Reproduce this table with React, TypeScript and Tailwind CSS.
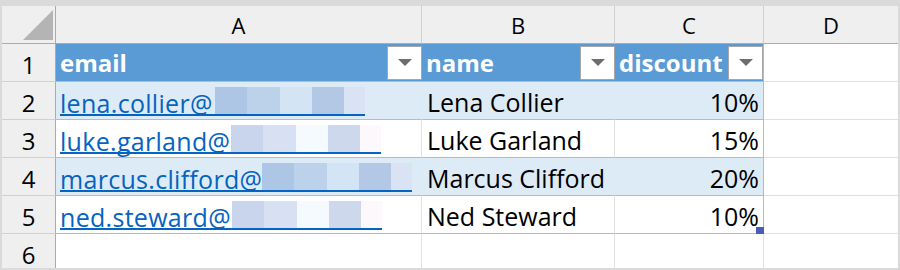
const blueBlocks = ["#adc6e5", "#bcd2eb", "#d3e5f5", "#b3c8e5", "#d9e3f3"];
const paleBlocks = ["#c9d5ec", "#d8e0f4", "#f5faff", "#cdd8ec", "#fdf8fb"];
const blockWidths = [32, 33, 32, 32, 21];

const rows = [
  { user: "lena.collier@", textW: "w-[155px]", name: "Lena Collier", discount: "10%", band: true },
  { user: "luke.garland@", textW: "w-[171px]", name: "Luke Garland", discount: "15%", band: false },
  { user: "marcus.clifford@", textW: "w-[202px]", name: "Marcus Clifford", discount: "20%", band: true },
  { user: "ned.steward@", textW: "w-[172px]", name: "Ned Steward", discount: "10%", band: false },
];

const FilterButton = () => (
  <div className="w-[35px] h-[34px] bg-white border border-[#a6a6a6] flex items-center justify-center shrink-0">
    <svg width="14" height="7" viewBox="0 0 14 7">
      <polygon points="0,0 14,0 7,7" fill="#6d6d6d" />
    </svg>
  </div>
);

const ColHead = ({ label, last }: { label: string; last?: boolean }) => (
  <div
    className={
      "bg-[#efefef] border-b border-[#ababab] flex items-center justify-center pt-[2px] text-[22px] text-black " +
      (last ? "" : "border-r border-r-[#d0d0d0]")
    }
  >
    {label}
  </div>
);

const RowHead = ({ n, last }: { n: number; last?: boolean }) => (
  <div
    className={
      "bg-[#efefef] border-r border-[#ababab] text-center pt-[4px] leading-[33px] text-[24px] text-black " +
      (last ? "" : "border-b border-b-[#d0d0d0]")
    }
  >
    {n}
  </div>
);

const TableHead = ({ label }: { label: string }) => (
  <div className="bg-[#5b9bd5] border-b border-[#9bc2e6] flex items-center justify-between pl-[4px]">
    <span className="text-white font-bold text-[24px] leading-[33px]">{label}</span>
    <FilterButton />
  </div>
);

export default function App() {
  return (
    <div className="w-[900px] h-[270px] bg-white border-2 border-t-[6px] border-[#dadada] font-['Open_Sans',sans-serif] overflow-hidden">
      <div className="grid grid-cols-[54px_366px_193px_149px_134px] grid-rows-[38px_38px_38px_38px_38px_38px_34px]">
        {/* corner */}
        <div className="bg-[#efefef] border-r border-b border-[#ababab] flex items-end justify-end pr-[2px] pb-[3px]">
          <svg width="30" height="30" viewBox="0 0 30 30">
            <polygon points="30,0 30,30 0,30" fill="#b4b4b4" />
          </svg>
        </div>
        <ColHead label="A" />
        <ColHead label="B" />
        <ColHead label="C" />
        <ColHead label="D" last />

        {/* table header */}
        <RowHead n={1} />
        <TableHead label="email" />
        <TableHead label="name" />
        <div className="bg-[#5b9bd5] border-b border-r border-[#9bc2e6] flex items-center justify-between pl-[4px]">
          <span className="text-white font-bold text-[24px] leading-[33px]">discount</span>
          <FilterButton />
        </div>
        <div className="border-b border-[#e1e1e1]" />

        {rows.map((r, i) => {
          const bg = r.band ? "bg-[#ddebf7]" : "bg-white";
          const vline = r.band ? "border-r-[#ddebf7]" : "border-r-[#e1e1e1]";
          const blocks = r.band ? blueBlocks : paleBlocks;
          return [
            <RowHead key={"h" + i} n={i + 2} />,
            <div key={"a" + i} className={`${bg} border-b border-b-[#9bc2e6] border-r ${vline} pl-[4px] pt-[5px]`}>
              <span className="inline-flex items-end border-b-2 border-[#0563c1]">
                <span className={`${r.textW} whitespace-nowrap text-[25px] tracking-[0.3px] leading-[22px] text-[#0563c1]`}>{r.user}</span>
                <span className="flex h-[27px]">
                  {blocks.map((c, j) => (
                    <span key={j} className="h-full" style={{ width: blockWidths[j], background: c }} />
                  ))}
                </span>
              </span>
            </div>,
            <div key={"b" + i} className={`${bg} border-b border-b-[#9bc2e6] border-r ${vline} pl-[5px] pt-[4px] text-[25px] leading-[33px] text-black whitespace-nowrap`}>
              {r.name}
            </div>,
            <div key={"c" + i} className={`${bg} relative border-b border-r border-[#9bc2e6] pr-[4px] pt-[4px] text-right text-[25px] leading-[33px] text-black`}>
              {r.discount}
              {i === rows.length - 1 && (
                <div className="absolute -right-[1px] -bottom-[1px] w-[8px] h-[7px] bg-[#4b5bb8]" />
              )}
            </div>,
            <div key={"d" + i} className="border-b border-[#e1e1e1]" />,
          ];
        })}

        <RowHead n={6} last />
        <div className="border-r border-[#e1e1e1]" />
        <div className="border-r border-[#e1e1e1]" />
        <div className="border-r border-[#e1e1e1]" />
        <div />
      </div>
    </div>
  );
}
